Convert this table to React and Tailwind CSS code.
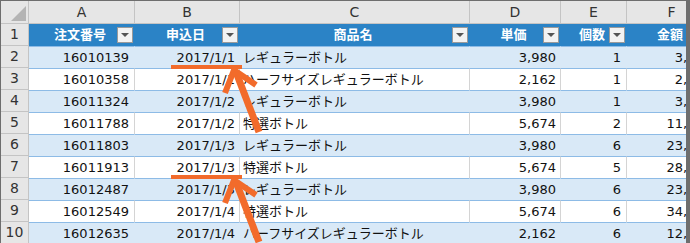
import React from "react";

const COLS = ["A", "B", "C", "D", "E", "F"];

const ROWS = [
  ["16010139", "2017/1/1", "レギュラーボトル", "3,980", "1", "3,980"],
  ["16010358", "2017/1/1", "ハーフサイズレギュラーボトル", "2,162", "1", "2,162"],
  ["16011324", "2017/1/2", "レギュラーボトル", "3,980", "1", "3,980"],
  ["16011788", "2017/1/2", "特選ボトル", "5,674", "2", "11,348"],
  ["16011803", "2017/1/3", "レギュラーボトル", "3,980", "6", "23,880"],
  ["16011913", "2017/1/3", "特選ボトル", "5,674", "5", "28,370"],
  ["16012487", "2017/1/3", "レギュラーボトル", "3,980", "6", "23,880"],
  ["16012549", "2017/1/4", "特選ボトル", "5,674", "6", "34,044"],
  ["16012635", "2017/1/4", "ハーフサイズレギュラーボトル", "2,162", "6", "12,972"],
];

const HEADS = ["注文番号", "申込日", "商品名", "単価", "個数", "金額"];

// sheet columns: row numbers, A..F (F runs past the window edge)
const grid = "grid grid-cols-[28px_106px_105px_230px_91px_66px_90px]";

function Dropdown() {
  return (
    <span className="absolute right-[2px] top-[3px] flex h-[16px] w-[16px] items-center justify-center border border-[#9a9a9a] bg-[#f3f3f3]">
      <span className="h-0 w-0 border-x-[4px] border-t-[4px] border-x-transparent border-t-[#555]" />
    </span>
  );
}

function Arrow({ y }) {
  return (
    <g>
      <rect x="171" y={y} width="71" height="4" fill="#f26b2b" />
      <line x1="236" y1={y + 7} x2="259" y2={y + 67} stroke="#f26b2b" strokeWidth="7" />
      <polyline
        points={`225,${y + 28} 234,${y + 5} 256,${y + 20}`}
        fill="none"
        stroke="#f26b2b"
        strokeWidth="6"
        strokeLinejoin="miter"
      />
    </g>
  );
}

export default function App() {
  return (
    <div
      className="relative flex h-[243px] w-[690px] border-l border-t border-[#6e6e6e] bg-white text-[#111]"
      style={{ fontFamily: '"DejaVu Sans", "Noto Sans CJK JP", sans-serif' }}
    >
      <div className="min-w-0 flex-1 overflow-hidden">
        {/* column letters */}
        <div className={`${grid} h-[23px] bg-[#e6e6e6] text-[14px] text-[#333]`}>
          <div className="relative border-b border-r border-[#c4c4c4]">
            <svg className="absolute bottom-[2px] right-[2px]" width="15" height="15">
              <polygon points="15,0 15,15 0,15" fill="#b4b4b4" />
            </svg>
          </div>
          {COLS.map((c) => (
            <div key={c} className="flex items-center justify-center border-b border-r border-[#c4c4c4]">
              {c}
            </div>
          ))}
        </div>

        {/* table header */}
        <div className={`${grid} h-[22px]`}>
          <div className="flex items-center justify-center border-b border-r border-[#c4c4c4] bg-[#e6e6e6] text-[14px] text-[#333]">1</div>
          {HEADS.map((h) => (
            <div key={h} className="relative flex items-center justify-center bg-[#2b83c6] text-[13px] font-bold text-white">
              <span className="pr-[4px]">{h}</span>
              <Dropdown />
            </div>
          ))}
        </div>

        {ROWS.map((r, i) => {
          const band = i % 2 === 0;
          const cell = `flex h-full items-center border-t border-[#8dbbe6] ${band ? "bg-[#d9e9f7]" : "bg-white"} text-[13px]`;
          const sep = band ? "border-r border-r-[#d9e9f7]" : "border-r border-r-[#d4d4d4]";
          return (
            <div key={i} className={`${grid} h-[22px]`}>
              <div className="flex items-center justify-center border-b border-r border-[#c4c4c4] bg-[#e6e6e6] text-[14px] text-[#333]">
                {i + 2}
              </div>
              <div className={`${cell} ${sep} justify-end pr-[5px]`}>{r[0]}</div>
              <div className={`${cell} ${sep} justify-end pr-[4px]`}>{r[1]}</div>
              <div className={`${cell} ${sep} pl-[3px]`}>{r[2]}</div>
              <div className={`${cell} ${sep} justify-end pr-[4px]`}>{r[3]}</div>
              <div className={`${cell} ${sep} justify-end pr-[5px]`}>{r[4]}</div>
              <div className={`${cell} ${sep} justify-end pr-[4px]`}>{r[5]}</div>
            </div>
          );
        })}
      </div>
      <div className="w-[4px] shrink-0 bg-[#6e6e6e]" />

      <svg className="pointer-events-none absolute left-[-1px] top-[-1px]" width="690" height="243">
        <Arrow y={65} />
        <Arrow y={175} />
      </svg>
    </div>
  );
}
